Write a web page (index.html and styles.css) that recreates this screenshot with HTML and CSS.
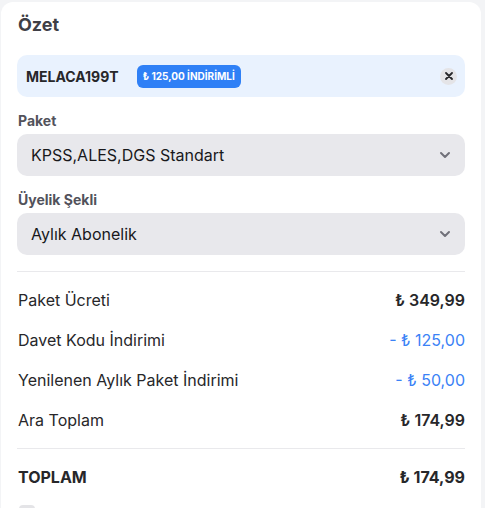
FILE: index.html
```html
<!DOCTYPE html>
<html lang="tr">
<head>
    <meta charset="UTF-8">
    <meta name="viewport" content="width=device-width, initial-scale=1.0">
    <title>Özet</title>
    <link rel="stylesheet" href="styles.css">
</head>
<body>
<div class="card">
    <h2 class="card-title">Özet</h2>

    <div class="coupon">
        <span class="coupon-code">MELACA199T</span>
        <span class="coupon-badge">₺ 125,00 İNDİRİMLİ</span>
        <button type="button" class="coupon-close" aria-label="Kaldır">
            <svg width="8" height="8" viewBox="0 0 8 8">
                <path d="M1 1L7 7M7 1L1 7" stroke="#27272a" stroke-width="1.8" stroke-linecap="round"/>
            </svg>
        </button>
    </div>

    <div class="form-group">
        <label>Paket</label>
        <div class="select">
            <span>KPSS,ALES,DGS Standart</span>
            <svg class="chevron" width="12" height="8" viewBox="0 0 12 8">
                <path d="M2 2L6 6L10 2" fill="none" stroke="#71717a" stroke-width="2" stroke-linecap="round" stroke-linejoin="round"/>
            </svg>
        </div>
    </div>

    <div class="form-group">
        <label>Üyelik Şekli</label>
        <div class="select">
            <span>Aylık Abonelik</span>
            <svg class="chevron" width="12" height="8" viewBox="0 0 12 8">
                <path d="M2 2L6 6L10 2" fill="none" stroke="#71717a" stroke-width="2" stroke-linecap="round" stroke-linejoin="round"/>
            </svg>
        </div>
    </div>

    <div class="summary">
        <div class="summary-row">
            <span>Paket Ücreti</span>
            <span class="amount">₺ 349,99</span>
        </div>
        <div class="summary-row">
            <span>Davet Kodu İndirimi</span>
            <span class="amount discount">- ₺ 125,00</span>
        </div>
        <div class="summary-row">
            <span>Yenilenen Aylık Paket İndirimi</span>
            <span class="amount discount">- ₺ 50,00</span>
        </div>
        <div class="summary-row">
            <span>Ara Toplam</span>
            <span class="amount">₺ 174,99</span>
        </div>
    </div>

    <div class="summary total">
        <div class="summary-row">
            <span>TOPLAM</span>
            <span class="amount">₺ 174,99</span>
        </div>
    </div>

    <div class="agree">
        <span class="checkbox"></span>
    </div>
</div>
</body>
</html>
```

FILE: styles.css
```css
body {
    font-family: Inter, "Noto Sans", sans-serif;
    margin: 0;
    padding: 2px 4px 0 1px;
    background-color: #f3f4f6;
    height: 508px;
    box-sizing: border-box;
    overflow: hidden;
}

.card {
    background-color: #fff;
    border-radius: 12px;
    padding: 9px 16px 0 16px;
    min-height: 520px;
}

.card-title {
    margin: 0 0 16px;
    font-size: 18px;
    line-height: 28px;
    font-weight: 700;
    color: #3f3f46;
    padding-left: 1px;
}

.coupon {
    display: flex;
    align-items: center;
    height: 42px;
    padding: 0 8px 0 9px;
    background-color: #e9f2fe;
    border-radius: 10px;
}

.coupon-code {
    font-size: 14px;
    font-weight: 700;
    color: #27272a;
}

.coupon-badge {
    margin-left: 18px;
    padding: 0 6px;
    height: 23px;
    line-height: 23px;
    font-size: 10px;
    font-weight: 700;
    color: #fff;
    background-color: #2f80f6;
    border-radius: 6px;
}

.coupon-close {
    margin-left: auto;
    width: 17px;
    height: 17px;
    padding: 0;
    border: none;
    border-radius: 50%;
    background-color: #e4e4e7;
    display: flex;
    align-items: center;
    justify-content: center;
    cursor: pointer;
}

.form-group label {
    display: block;
    margin: 14px 0 3px;
    font-size: 14px;
    line-height: 20px;
    font-weight: 700;
    color: #52525b;
    padding-left: 1px;
}

.select {
    display: flex;
    align-items: center;
    justify-content: space-between;
    height: 42px;
    padding: 0 14px 0 14px;
    background-color: #e8e8ec;
    border-radius: 10px;
    font-size: 16px;
    color: #18181b;
}

.summary {
    margin-top: 16px;
    border-top: 1px solid #e9e9ec;
    padding-top: 8px;
}

.summary-row {
    display: flex;
    justify-content: space-between;
    align-items: center;
    height: 40px;
    font-size: 16px;
    color: #27272a;
    padding-left: 1px;
}

.amount {
    font-weight: 600;
}

.amount.discount {
    font-weight: 400;
    color: #3b82f6;
}

.total {
    margin-top: 8px;
}

.total .summary-row {
    font-weight: 700;
}

.total .amount {
    font-weight: 700;
}

.agree {
    padding-top: 8px;
    padding-left: 2px;
}

.checkbox {
    display: block;
    width: 16px;
    height: 16px;
    border-radius: 4px;
    background-color: #e4e4e7;
}
```
